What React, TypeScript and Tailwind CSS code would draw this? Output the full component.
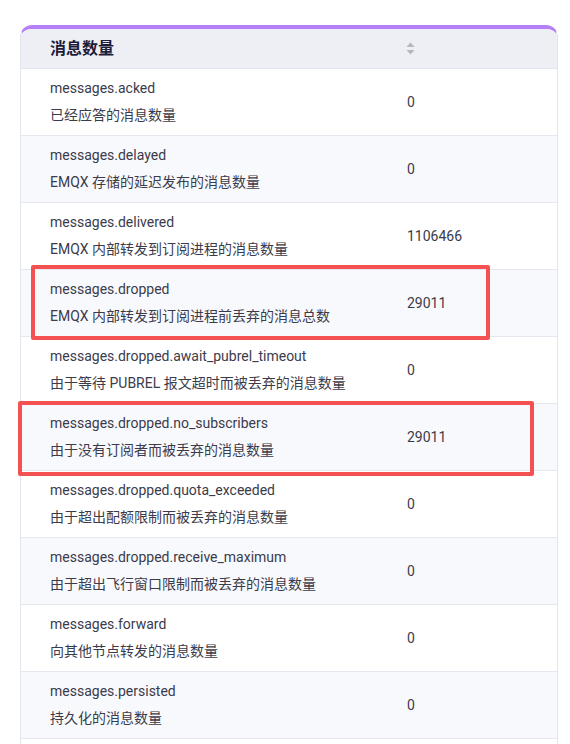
import React from "react";

type Metric = { name: string; desc: string; value: string };

const metrics: Metric[] = [
  { name: "messages.acked", desc: "已经应答的消息数量", value: "0" },
  { name: "messages.delayed", desc: "EMQX 存储的延迟发布的消息数量", value: "0" },
  { name: "messages.delivered", desc: "EMQX 内部转发到订阅进程的消息数量", value: "1106466" },
  { name: "messages.dropped", desc: "EMQX 内部转发到订阅进程前丢弃的消息总数", value: "29011" },
  { name: "messages.dropped.await_pubrel_timeout", desc: "由于等待 PUBREL 报文超时而被丢弃的消息数量", value: "0" },
  { name: "messages.dropped.no_subscribers", desc: "由于没有订阅者而被丢弃的消息数量", value: "29011" },
  { name: "messages.dropped.quota_exceeded", desc: "由于超出配额限制而被丢弃的消息数量", value: "0" },
  { name: "messages.dropped.receive_maximum", desc: "由于超出飞行窗口限制而被丢弃的消息数量", value: "0" },
  { name: "messages.forward", desc: "向其他节点转发的消息数量", value: "0" },
  { name: "messages.persisted", desc: "持久化的消息数量", value: "0" },
];

function SortIcon() {
  return (
    <svg width="9" height="13" viewBox="0 0 9 13" className="block">
      <path d="M4.5 0.5 L8.5 5 L0.5 5 Z" fill="#b4b7c0" />
      <path d="M0.5 8 L8.5 8 L4.5 12.5 Z" fill="#b4b7c0" />
    </svg>
  );
}

export default function App() {
  return (
    <div
      className="relative h-[744px] overflow-hidden bg-white"
      style={{ fontFamily: "Roboto, 'Noto Sans CJK SC', sans-serif" }}
    >
      <div className="pt-[25px] pl-[20px] w-[558px]">
        <div className="overflow-hidden rounded-t-[12px] border border-[#e3e5ee] border-t-[4px] border-t-[#b57ff8] bg-white">
          <div className="flex h-[40px] items-center bg-[#eeeff5] border-b border-[#e3e5ee]">
            <div className="w-[385px] pl-[29px] text-[16px] font-bold text-[#1c1c3b]">消息数量</div>
            <SortIcon />
          </div>
          {metrics.map((m, i) => (
            <div
              key={m.name}
              className={`flex h-[67px] items-center border-b border-[#e6e8f0] ${
                i % 2 === 1 ? "bg-[#f8f9fc]" : "bg-white"
              }`}
            >
              <div className="w-[386px] pl-[29px] text-[14px] leading-[27px] text-[#3b3b4b]">
                <div>{m.name}</div>
                <div>{m.desc}</div>
              </div>
              <div className="text-[14px] text-[#3b3b4b]">{m.value}</div>
            </div>
          ))}
          {/* next row, cut by the window */}
          <div className="h-[67px] bg-white" />
        </div>
      </div>

      <div className="pointer-events-none absolute left-[31px] top-[265px] h-[75px] w-[459px] rounded-[2px] border-[4px] border-[#f45252]" />
      <div className="pointer-events-none absolute left-[18px] top-[401px] h-[75px] w-[516px] rounded-[2px] border-[4px] border-[#f45252]" />
    </div>
  );
}
